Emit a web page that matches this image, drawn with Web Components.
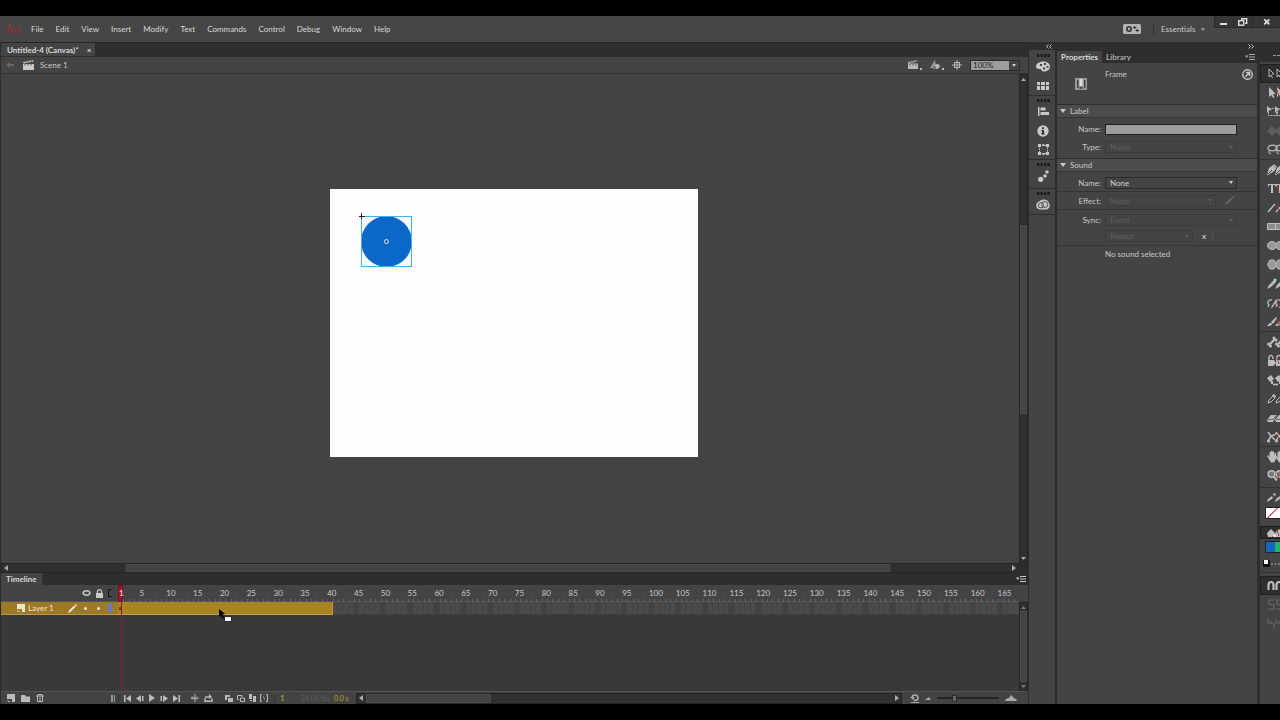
<!DOCTYPE html>
<html lang="en">
<head>
<meta charset="utf-8">
<title>Untitled-4 (Canvas)</title>
<style>
  html, body {
    height: 100%;
    margin: 0;
    background: #000;
  }
  body {
    font-family: Lato, "Open Sans", sans-serif;
    font-size: 8px;
    line-height: 10px;
    color: #c8c8c8;
  }
</style>
</head>
<body>
<an-app></an-app>

<script>
// name: [width, height, markup]
const icons = {
  back: [8, 8, '<path fill="#666" d="M0 4l4-3v2h4v2H4v2z"/>'],
  scene: [11, 10, '<path d="M0 4h11v6H0zM0 2l10-2 .4 1.6L.6 3.6z"/><path stroke="#444" stroke-width=".9" d="M2 1l1.6 2M4.6.6l1.6 2M7.3 0l1.6 2M2 4v1.4M5 4v1.4M8 4v1.4"/>'],
  sceneMenu: [14, 10, '<path d="M0 3.500h10V9H0zM0 2l9-2 .4 1.600L.6 3.600zM12 8h2v2h-2z"/><path stroke="#444" stroke-width=".9" d="M2 1l1.600 2M4.600.6l1.600 2M7.300 0l1.600 2M2 4v1.400M5 4v1.400M8 4v1.400"/>'],
  symbols: [14, 10, '<path d="M0 8l5-8 1 8z" opacity=".75"/><circle cx="7" cy="6.500" r="2.400"/><path d="M3 6h3v3H3z" fill="#777"/><path d="M8 3l3 4H9z" opacity=".5"/><path d="M12 8h2v2h-2z"/>'],
  center: [10, 10, '<g fill="none" stroke="currentColor"><rect x="2.5" y="2.5" width="5" height="5"/><path d="M5 0v10M0 5h10"/></g>'],
  sync: [18, 10, '<rect width="18" height="10" rx="1.5" fill="#b4b4b4"/><circle cx="6" cy="5" r="2.200" fill="none" stroke="#333" stroke-width="1.600"/><path stroke="#333" d="M10 3.500h3.400M11.700 2v3M12.500 6.500h3.400M14.200 5v3"/>'],
  minimize: [8, 8, '<path d="M0 5h7v2H0z" fill="#ddd"/>'],
  restore: [10, 8, '<g fill="none" stroke="#ddd" stroke-width="1.4"><path d="M3.700 2.500V.7h5v4.600H7"/><rect x=".7" y="2.700" width="5" height="4.500"/></g>'],
  close: [8, 8, '<path stroke="#ddd" stroke-width="1.8" d="M1.300 1.300l5 5M6.300 1.300l-5 5"/>'],
  caret: [6, 4, '<path d="M0 0h6L3 4z"/>'],
  smallCaret: [4, 3, '<path d="M0 0h4L2 3z"/>'],
  collapse: [6, 5, '<path fill="none" stroke="currentColor" d="M2.500.5l-2 2 2 2M5.500.5l-2 2 2 2"/>'],
  expand: [6, 5, '<path fill="none" stroke="currentColor" d="M.5.5l2 2-2 2M3.500.5l2 2-2 2"/>'],
  menu: [10, 6, '<path d="M0 1.500h3.500L1.700 4z"/><path stroke="currentColor" d="M4 .5h6M4 3h6M4 5.500h6"/>'],
  left: [4, 6, '<path d="M4 0v6L0 3z"/>'],
  right: [4, 6, '<path d="M0 0v6l4-3z"/>'],
  up: [5, 3, '<path d="M0 3h5L2.500 0z"/>'],
  down: [5, 3, '<path d="M0 0h5L2.500 3z"/>'],
  grip: [13, 3, '<path stroke="#1c1c1c" stroke-width="3" stroke-dasharray="2.300 1.200" d="M0 1.500h13"/>'],
  palette: [14, 11, '<path fill-rule="evenodd" d="M7 .5c4 0 7 2 7 5s-3 5-6.500 5C5 10.500 6 8 4 8S0 8 0 5.500s3-5 7-5zM4 3v2h2V3zm4-1v2h2V2zm2.500 3v1.800h2V5zM7 6.500v2h2v-2z"/>'],
  swatches: [12, 8, '<path d="M0 0h3v3H0zM4 0h4v3H4zM9 0h3v3H9zM0 4h3v4H0zM4 4h4v4H4zM9 4h3v4H9z"/>'],
  align: [11, 9, '<path d="M0 0h1.500v9H0zM2.500.5h5v3h-5zM2.500 5H11v3H2.500z"/>'],
  info: [12, 12, '<circle cx="6" cy="6" r="5.700"/><path fill="#333" d="M5 2.200h2v1.900H5zM4.300 5H7v3.500h.8v1H4.300v-1H5V6h-.7z"/>'],
  transform: [11, 11, '<rect x="1.500" y="1.500" width="8" height="8" fill="none" stroke="currentColor" stroke-dasharray="1.500 1"/><path d="M0 0h3v3H0zM4.500 0h2v2h-2zM8 0h3v3H8zM0 8h3v3H0zM4.500 9h2v2h-2zM8 8h3v3H8z"/>'],
  motion: [11, 12, '<circle cx="2.700" cy="9.300" r="2.600"/><circle cx="7" cy="6" r="1.800"/><circle cx="9" cy="2" r="1.700"/>'],
  cloud: [14, 11, '<path d="M4 2c2-2.500 8-2 9 2 2 3 0 6.500-3 6.500H4C-1 10-1 3 4 2z"/><g fill="none" stroke="#505050"><circle cx="5" cy="6.300" r="2.600"/><circle cx="8.800" cy="5.500" r="3"/></g>'],
  frame: [12, 12, '<rect width="12" height="12" fill="#999"/><path fill="#444" d="M2 2h1.500v8H2zM9 2h1.500v8H9z"/><path fill="#ddd" d="M4.500 1h3v7h-3z"/><path fill="#555" d="M4.500 8.500h3V11h-3z"/>'],
  help: [11, 11, '<g fill="none" stroke="currentColor" stroke-width="1.400"><circle cx="5.500" cy="5.500" r="4.700"/><path d="M3.300 7.700l4-4M4 3.400h3.500V7" stroke-width="1.500"/></g>'],
  pencil: [9, 9, '<path d="M0 9l1-2.500L6 1.500 7.500 3l-5 5zM6.500 1L8 0l1 1-1 1.500z"/>'],
  eye: [9, 6, '<path fill="none" stroke="currentColor" stroke-width="1.400" d="M1 3c1-3 6-3 7 0-1 3-6 3-7 0z"/>'],
  lock: [7, 9, '<rect y="4" width="7" height="5"/><path fill="none" stroke="currentColor" stroke-width="1.200" d="M1.500 4V2.500c0-2.500 4-2.500 4 0V4"/>'],
  outline: [4, 8, '<path fill="none" stroke="#111" d="M3.500.5h-3v7h3"/>'],
  layer: [8, 8, '<path d="M0 0h8v8H5V5H0z"/><path d="M0 6l3 2H1z"/>'],
  dot: [3, 3, '<circle cx="1.500" cy="1.500" r="1.500"/>'],
  newLayer: [8, 8, '<path d="M0 0h8v8H5V5H0z"/><path d="M0 6l4 2H1z"/>'],
  folder: [9, 7, '<path d="M0 0h4l1 1.500h4V7H0z"/>'],
  trash: [8, 8, '<path fill="none" stroke="currentColor" d="M0 2h8M2 2V.5h4V2M1.500 2v5.500h5V2M4 3v4"/>'],
  onionBar: [4, 7, '<path d="M0 0h2v7H0zM3 0h1v7H3z"/>'],
  first: [7, 7, '<path d="M0 0h1.500v7H0zM7 0v7L2 3.500z"/>'],
  prev: [8, 7, '<path d="M5 0v7L0 3.500zM6 1h1.500v5H6z"/>'],
  play: [6, 8, '<path d="M0 0v8l6-4z"/>'],
  next: [8, 7, '<path d="M3 0v7l5-3.500zM.5 1H2v5H.5z"/>'],
  last: [7, 7, '<path d="M5.500 0H7v7H5.500zM0 0v7l5-3.500z"/>'],
  centerFrame: [8, 8, '<path d="M3.500 0h1v8h-1zM0 3.500h8v1.200H0zM1.500 2v4L0 4zM6.500 2v4L8 4z"/>'],
  loop: [9, 8, '<path fill="none" stroke="currentColor" stroke-width="1.400" d="M1 4v3.300h7V4M1 3h5"/><path d="M5 0l3 2.700L5 5z"/>'],
  onion: [8, 7, '<path d="M0 0h5v2H2v3H0zM3 3h5v4H3z"/>'],
  onionOutline: [8, 7, '<path fill="none" stroke="currentColor" d="M5 2V.5H.5v4H2M3.500 3h4v3.500h-4z"/>'],
  editFrames: [7, 8, '<path d="M0 0h3v5H0zM4 2h3v6H4z"/><path d="M1 6h2v1H1z"/>'],
  markers: [8, 8, '<path fill="none" stroke="currentColor" d="M2 .5H.5v7H2M6 .5h1.500v7H6M3 3h1M4 5h1"/>'],
  undo: [9, 9, '<path fill="none" stroke="currentColor" stroke-width="1.600" d="M2 4c0-4 6-4 6 0 0 2-2 2.500-4 2.500"/><path d="M0 3h4v3.500zM1 8h8v1H1z"/>'],
  smallHill: [6, 3, '<path d="M0 3l2-1.500L4 0l2 3z"/>'],
  bigHill: [12, 6, '<path d="M0 6l1-2 3-1 2-3 3 3 2 1 1 2z"/>'],
  cursor: [15, 17, '<path fill="#000" d="M0 0l6 5-2.500.4L5 9 3.500 9.500 2 6 0 8z"/><path fill="#fff" d="M6 8h6v4H6z"/><path fill="none" stroke="#222" d="M5.500 7.500h7v5h-7z" opacity=".5"/>'],
  defaults: [18, 8, '<path fill="#111" d="M0 0h7v7H0z"/><path fill="#fff" d="M1 0h4v4H1z"/><path stroke="#777" stroke-width="2" stroke-dasharray="2 1.500" d="M8 4h10"/>']
};

// Tools drawn as a glyph in a 9px box, followed by its modifier copy
const tools = {
  selection: '<path fill="none" stroke="currentColor" d="M2 2v8l2-2 1.500 3M2 2l5 5H5"/>',
  subselection: '<path d="M2 1v10l2.500-2 1.500 3 1.500-.8L6 8h3z"/>',
  freeTransform: '<path d="M0 1l5 4-3 .5L0 8z"/><rect x="1.500" y="3.500" width="9" height="7" fill="none" stroke="currentColor" stroke-dasharray="2 1"/>',
  rotate3d: '<path fill="#5e5e5e" d="M0 7l5-5 5 5-5 5z"/>',
  lasso: '<ellipse cx="5.500" cy="5" rx="4.500" ry="2.800" fill="none" stroke="currentColor" stroke-width="1.300"/><path fill="none" stroke="currentColor" d="M2 7v3l2 1"/>',
  pen: '<path d="M0 12l2-7 4-3 3 4-3 3-5 3z"/><path stroke="#444" d="M1 11l4-4"/><path d="M7 1l3 3-1 1-3-3z"/>',
  text: '<path d="M1 2h8v2.500h-.8L7.800 3H6v7.500l1 .5H3l1-.5V3H2.200l-.4 1.500H1z"/>',
  line: '<path stroke="currentColor" stroke-width="1.500" d="M1 11L8 3"/>',
  rectangle: '<path fill="#8d8d8d" stroke="currentColor" d="M.5 3.500h9v6h-9z"/>',
  oval: '<ellipse cx="5" cy="6.500" rx="4.500" ry="4" fill="#999" stroke="currentColor"/>',
  polygon: '<path fill="#999" stroke="currentColor" d="M3 2h4l3 4.500L7 11H3L.5 6.500z"/>',
  pencilTool: '<path d="M0 12l2-4 5-5 2 2-5 5z"/><circle cx="8" cy="3" r="1.500" fill="#9edede"/>',
  brush: '<path d="M4 12c1-3 3-5 5-9l1 1c-1 3-3 5-5 8z"/><path fill="none" stroke="currentColor" stroke-width="1.300" d="M5 4C1 3 0 7 2 9l-1 2"/>',
  paint: '<path d="M0 11c2-1 2-4 4-3s1 3-4 3zM4 7l5-5 1 1-4 6z"/>',
  bone: '<path stroke="currentColor" stroke-width="2" d="M2 10l6-6"/><circle cx="1.500" cy="9" r="1.500"/><circle cx="3.500" cy="11" r="1.500"/><circle cx="7" cy="3" r="1.500"/><circle cx="9" cy="5" r="1.500"/>',
  bucket: '<path d="M1 6h6l2 3-3 3H1z"/><path fill="none" stroke="currentColor" stroke-width="1.400" d="M2 6c-1-6 4-6 4-1"/>',
  ink: '<path d="M0 5l4-3 3 4-4 3zM4 8h2v3H4z"/><path stroke="currentColor" stroke-width="1.600" d="M6 11.500h5"/>',
  dropper: '<path fill="none" stroke="currentColor" d="M1 11l1-3 4-4 2 2-4 4z"/><path d="M5 3l2-1 2 2-1 2z"/>',
  eraser: '<path d="M0 9l4-5h6L6 11H1z"/><path stroke="#666" d="M1 8.500h5l3-4"/>',
  width: '<path fill="none" stroke="currentColor" stroke-width="1.500" d="M1 2l3 4 3-1 3-2M1 11l3-5 4 4"/><circle cx="1.500" cy="11" r="1.500"/>',
  hand: '<path d="M0 6l1-1 1.500 2V2h1.500v4-5h1.500v5-4.500H7V6l.5-3H9v6l-2 3.500H4z"/>',
  zoom: '<circle cx="4.500" cy="5" r="3.300" fill="#777" stroke="currentColor" stroke-width="1.500"/><path stroke="currentColor" stroke-width="2" d="M7 8l3 3.500"/>',
  stroke: '<path d="M0 11l1-3 4-3 1 2-4 3zM6 3l2-1 1 2-2 1z"/>',
  fill: '<path d="M0 7l4-4 4 4-3 4H1z"/><path fill="#ddd" d="M6 8h3v3H6z"/>',
  snap: '<path fill="none" stroke="currentColor" stroke-width="2.200" d="M1.500 11V6c0-4 5-4 5 0v5"/>',
  smooth: '<path fill="none" stroke="#666" stroke-width="1.200" d="M7 2H2v4l5 1v4H1"/>',
  straighten: '<path fill="none" stroke="#666" stroke-width="1.200" d="M1 2v4h6v6M4 6V4"/>'
};

const base = `
  * { box-sizing: border-box; }
  button, select, input {
    font: inherit;
    color: inherit;
    margin: 0;
    padding: 0;
    border: 0;
    border-radius: 0;
    background: none;
    outline: 0;
  }
  button { display: flex; align-items: center; justify-content: center; }
  select { appearance: none; min-width: 0; width: 100%; }
  h2 { font-size: inherit; font-weight: 700; margin: 0; }
  .drop { display: grid; align-items: center; }
  .drop > * { grid-area: 1 / 1; }
  .drop x-icon { justify-self: end; pointer-events: none; }
`;

function define(name, css, html, setup) {
  const template = document.createElement("template");
  template.innerHTML = `<style>${base}${css}</style>${html}`;
  customElements.define(name, class extends HTMLElement {
    constructor() {
      super();
      this.attachShadow({ mode: "open" });
      this.shadowRoot.appendChild(template.content.cloneNode(true));
    }
    connectedCallback() {
      if (setup) setup(this.shadowRoot, this);
    }
  });
}

define("x-icon", `
  :host { display: block; flex: none; }
  svg { display: block; fill: currentColor; }
`, `<svg aria-hidden="true"></svg>`, (root, host) => {
  const [w, h, markup] = icons[host.getAttribute("name")];
  const svg = root.querySelector("svg");
  svg.setAttribute("width", w);
  svg.setAttribute("height", h);
  svg.setAttribute("viewBox", `0 0 ${w} ${h}`);
  svg.innerHTML = markup;
});

define("scroll-bar", `
  :host { display: flex; align-items: stretch; box-sizing: border-box; background: #303030; color: #aaa; border: 1px solid #252525; }
  :host([vertical]) { flex-direction: column; }
  button { flex: none; width: 8px; }
  :host([vertical]) button { width: auto; height: 8px; }
  .before { flex: var(--before, 0) 0 0; }
  .thumb { flex: var(--thumb, 1) 0 0; background: #434343; border: 1px solid #4c4c4c; }
  .after { flex: var(--after, 0) 0 0; }
`, `
  <button class="dec"></button>
  <div class="before"></div><div class="thumb"></div><div class="after"></div>
  <button class="inc"></button>
`, (root, host) => {
  const vertical = host.hasAttribute("vertical");
  const dec = root.querySelector(".dec");
  const inc = root.querySelector(".inc");
  dec.innerHTML = `<x-icon name="${vertical ? "up" : "left"}"></x-icon>`;
  inc.innerHTML = `<x-icon name="${vertical ? "down" : "right"}"></x-icon>`;
  dec.setAttribute("aria-label", "Scroll back");
  inc.setAttribute("aria-label", "Scroll forward");
});

define("menu-bar", `
  :host { display: flex; box-sizing: border-box; height: 26px; flex: none; align-items: center; background: #464646; padding-left: 5px; }
  .logo { width: 26px; font-size: 13px; line-height: 16px; color: #8f3238; }
  nav { display: flex; gap: 12px; flex: 1; color: #d8d8d8; }
  .sep { width: 1px; height: 14px; background: #353535; margin: 0 7px 0 12px; }
  .workspace { width: 44px; margin-right: 9px; }
  .workspace x-icon { color: #999; }
  .win { display: flex; align-self: flex-start; background: #363636; height: 12px; border: 1px solid #2a2a2a; border-top: 0; border-right: 0; }
  .win button { width: 19px; border-right: 1px solid #2a2a2a; }
  .win button:last-child { width: 27px; border: 0; }
`, `
  <span class="logo">An</span>
  <nav>
    <button>File</button><button>Edit</button><button>View</button><button>Insert</button>
    <button>Modify</button><button>Text</button><button>Commands</button><button>Control</button>
    <button>Debug</button><button>Window</button><button>Help</button>
  </nav>
  <button aria-label="Sync settings"><x-icon name="sync"></x-icon></button>
  <div class="sep"></div>
  <div class="drop workspace">
    <select aria-label="Workspace"><option>Essentials</option></select>
    <x-icon name="smallCaret"></x-icon>
  </div>
  <div class="win">
    <button aria-label="Minimize"><x-icon name="minimize"></x-icon></button>
    <button aria-label="Restore"><x-icon name="restore"></x-icon></button>
    <button aria-label="Close"><x-icon name="close"></x-icon></button>
  </div>
`);

define("document-view", `
  :host { display: flex; flex-direction: column; min-height: 0; flex: 1; }
  .tabs { display: flex; flex: none; height: 14px; background: #2e2e2e; border-top: 1px solid #262626; }
  .tab { display: flex; align-items: center; gap: 8px; padding: 0 4px 0 6px; background: #444; color: #d8d8d8; font-weight: 700; }
  .scene { display: flex; flex: none; align-items: center; height: 18px; padding: 0 8px 0 5px; background: #444; border-top: 1px solid #303030; border-bottom: 1px solid #303030; }
  .scene > span { flex: 1; margin-left: 6px; }
  .scene > button { margin-right: 8px; color: #b8b8b8; }
  .scene > .back { margin-right: 9px; }
  .zoom { width: 50px; border: 1px solid #2a2a2a; height: 11px; }
  .zoom select { background: linear-gradient(#9d9d9d, #9d9d9d) 0 0 / 38px 100% no-repeat; height: 9px; color: #222; padding-left: 2px; line-height: 8px; }
  .zoom x-icon { margin-right: 3px; }
  .work { flex: 1; min-height: 0; display: grid; grid-template: minmax(0, 1fr) 10px / minmax(0, 1fr) 9px; }
  .paste { display: grid; place-items: center; padding: 8px 0 0 8px; background: #434343; overflow: hidden; }
  .stage { position: relative; width: 368px; height: 268px; background: #fdfdfd; }
  .stage svg { position: absolute; left: 27px; top: 23px; }
`, `
  <div class="tabs">
    <div class="tab"><span>Untitled-4 (Canvas)*</span><button aria-label="Close document">×</button></div>
  </div>
  <div class="scene">
    <button class="back" aria-label="Back"><x-icon name="back"></x-icon></button>
    <x-icon name="scene"></x-icon>
    <span>Scene 1</span>
    <button aria-label="Edit scene"><x-icon name="sceneMenu"></x-icon></button>
    <button aria-label="Edit symbols"><x-icon name="symbols"></x-icon></button>
    <button aria-label="Center stage"><x-icon name="center"></x-icon></button>
    <div class="drop zoom">
      <select aria-label="Zoom"><option>100%</option></select>
      <x-icon name="smallCaret"></x-icon>
    </div>
  </div>
  <div class="work">
    <div class="paste">
      <div class="stage">
        <svg width="56" height="56" viewBox="0 0 56 56">
          <circle cx="29.500" cy="29.500" r="25.500" fill="#0b68c8"/>
          <path fill="#3fb0f0" fill-rule="evenodd" d="M4 4h51v51H4zM5 5v49h49V5z"/>
          <path stroke="#222" d="M4.500 1v6M2 4.500h6"/>
          <circle cx="29.500" cy="29.500" r="2" fill="#1c5ca8" stroke="#d5e4f4"/>
        </svg>
      </div>
    </div>
    <scroll-bar vertical style="--before:140;--thumb:184;--after:138"></scroll-bar>
    <scroll-bar style="--before:116;--thumb:764;--after:120"></scroll-bar>
  </div>
`);

define("time-line", `
  :host { display: flex; flex-direction: column; flex: none; }
  .tabs { display: flex; align-items: center; justify-content: space-between; height: 12px; background: #2e2e2e; padding-right: 2px; }
  .tabs h2 { background: #444; color: #d8d8d8; padding: 1px 5px; height: 12px; }
  .body { display: grid; grid-template-columns: 117px minmax(0, 1fr) 9px; height: 106px; background: #393939; }
  .layers { display: grid; grid-template-rows: 17px 13px 1fr; }
  .head, .row { display: flex; align-items: center; justify-content: flex-end; }
  .head { background: #444; gap: 5px; padding-right: 6px; border-bottom: 1px solid #555; }
  .row { background: #9c7926; color: #f0e6cc; padding-right: 6px; border-bottom: 1px solid #b99a50; }
  .row span { width: 40px; margin-left: 3px; }
  .row .dots { display: flex; gap: 10px; margin: 0 8px 0 7px; }
  .mark { width: 4px; height: 8px; background: #6878d0; }
  .frames { position: relative; display: grid; grid-template-columns: repeat(168, minmax(0, 1fr)); grid-template-rows: 17px 13px 1fr; }
  .ruler { grid-area: 1 / 1 / 2 / -1; background: #444; border-bottom: 1px solid #555; }
  .num { grid-row: 1; align-self: center; white-space: nowrap; padding-bottom: 1px; }
  .tick { grid-row: 1; align-self: end; height: 3px; border-left: 1px solid #666; }
  .cell { grid-row: 2; background: #4a4a4a; border-right: 1px solid #444; border-bottom: 1px solid #404040; }
  .cell.fifth { background: #424242; }
  .span { grid-area: 2 / 1 / 3 / 41; background: #a98422; border-bottom: 1px solid #c2a45c; border-right: 1px solid #d0893c; }
  .head-mark { grid-area: 1 / 1; background: #a3122c; z-index: 1; border: 1px solid #7e1024; }
  .head-line { grid-area: 2 / 1 / 4 / 2; justify-self: start; margin-left: 3px; width: 1px; background: #8a1a2f; z-index: 1; }
  .key { grid-area: 2 / 1; align-self: center; justify-self: center; width: 3px; height: 3px; background: #8e2a18; z-index: 1; }
  .num.first { z-index: 2; color: #eee; padding-left: 1px; }
  .pointer { position: absolute; left: 101px; top: 24px; z-index: 3; }
  .side { display: flex; flex-direction: column; background: #444; padding-top: 17px; }
  .side scroll-bar { flex: 1; color: #777; }
  footer { display: flex; align-items: center; height: 13px; background: #434343; border-top: 1px solid #555; color: #bbb; }
  .edit { display: flex; align-items: center; gap: 6px; width: 117px; padding: 0 3px 0 6px; }
  .edit x-icon[name=onionBar] { margin-left: auto; color: #999; }
  .play, .onion { display: flex; align-items: center; }
  .play { gap: 5px; padding: 0 12px 0 5px; border-left: 1px solid #333; }
  .play button:nth-child(6) { margin-left: 6px; }
  .onion { gap: 4px; padding: 0 6px 0 0; border-right: 1px solid #333; }
  .now, .time { color: #c8a22c; }
  .now { width: 21px; margin-left: 5px; }
  .fps, .time { font-size: 7px; white-space: nowrap; }
  .fps { color: #5e5e5e; width: 33px; }
  .time { width: 22px; }
  footer scroll-bar { flex: 1; height: 11px; }
  .tail { display: flex; align-items: center; gap: 6px; padding: 0 11px 0 8px; color: #aaa; }
  input { appearance: none; width: 62px; height: 8px; background: linear-gradient(#222, #222) center / 100% 2px no-repeat; }
  input::-webkit-slider-thumb { appearance: none; width: 5px; height: 7px; background: #666; border: 1px solid #2a2a2a; }
`, `
  <div class="tabs">
    <h2>Timeline</h2>
    <button aria-label="Timeline menu"><x-icon name="menu"></x-icon></button>
  </div>
  <div class="body">
    <div class="layers">
      <div class="head">
        <x-icon name="eye"></x-icon><x-icon name="lock"></x-icon><x-icon name="outline"></x-icon>
      </div>
      <div class="row">
        <x-icon name="layer"></x-icon><span>Layer 1</span>
        <x-icon name="pencil"></x-icon>
        <div class="dots"><x-icon name="dot"></x-icon><x-icon name="dot"></x-icon></div>
        <div class="mark"></div>
      </div>
    </div>
    <div class="frames">
      <div class="ruler"></div>
      <div class="head-mark"></div><div class="head-line"></div>
      <x-icon class="pointer" name="cursor"></x-icon>
    </div>
    <div class="side"><scroll-bar vertical></scroll-bar></div>
  </div>
  <footer>
    <div class="edit">
      <button aria-label="New layer"><x-icon name="newLayer"></x-icon></button>
      <button aria-label="New folder"><x-icon name="folder"></x-icon></button>
      <button aria-label="Delete"><x-icon name="trash"></x-icon></button>
      <x-icon name="onionBar"></x-icon>
    </div>
    <div class="play">
      <button aria-label="First frame"><x-icon name="first"></x-icon></button>
      <button aria-label="Step back"><x-icon name="prev"></x-icon></button>
      <button aria-label="Play"><x-icon name="play"></x-icon></button>
      <button aria-label="Step forward"><x-icon name="next"></x-icon></button>
      <button aria-label="Last frame"><x-icon name="last"></x-icon></button>
      <button aria-label="Center frame"><x-icon name="centerFrame"></x-icon></button>
      <button aria-label="Loop"><x-icon name="loop"></x-icon></button>
    </div>
    <div class="onion">
      <button aria-label="Onion skin"><x-icon name="onion"></x-icon></button>
      <button aria-label="Onion skin outlines"><x-icon name="onionOutline"></x-icon></button>
      <button aria-label="Edit multiple frames"><x-icon name="editFrames"></x-icon></button>
      <button aria-label="Modify markers"><x-icon name="markers"></x-icon></button>
    </div>
    <span class="now">1</span><span class="fps">24.00 fps</span><span class="time">0.0 s</span>
    <scroll-bar style="--before:1;--thumb:123;--after:400"></scroll-bar>
    <div class="tail">
      <button aria-label="Reset zoom"><x-icon name="undo"></x-icon></button>
      <x-icon name="smallHill"></x-icon>
      <input type="range" aria-label="Timeline zoom" min="0" max="100" value="27">
      <x-icon name="bigHill"></x-icon>
    </div>
  </footer>
`, (root) => {
  const frames = root.querySelector(".frames");
  const add = (cls, column, text = "") => {
    const el = document.createElement("div");
    el.className = cls;
    if (column) el.style.gridColumn = column;
    el.textContent = text;
    frames.appendChild(el);
  };
  for (let i = 1; i <= 168; i++) {
    add(i % 5 ? "cell" : "cell fifth", i);
    if (i > 1) add("tick", i);
  }
  add("span");
  add("key");
  add("num first", "1 / span 2", "1");
  for (let i = 5; i <= 165; i += 5) add("num", `${i} / span 4`, i);
});

define("panel-dock", `
  :host { display: flex; flex-direction: column; background: #444; border-right: 2px solid #2c2c2c; border-left: 1px solid #2c2c2c; }
  header { display: flex; justify-content: flex-end; align-items: center; height: 8px; padding-right: 3px; background: #2e2e2e; }
  .group { display: flex; flex-direction: column; align-items: center; padding: 3px 0 0 2px; border-bottom: 1px solid #2f2f2f; }
  .group.first { padding-top: 4px; }
  .group.motion { padding-bottom: 3px; }
  .group button { height: 19px; width: 100%; }
`, `
  <header><x-icon name="collapse"></x-icon></header>
  <div class="group first">
    <x-icon name="grip"></x-icon>
    <button aria-label="Color"><x-icon name="palette"></x-icon></button>
    <button aria-label="Swatches"><x-icon name="swatches"></x-icon></button>
  </div>
  <div class="group">
    <x-icon name="grip"></x-icon>
    <button aria-label="Align"><x-icon name="align"></x-icon></button>
    <button aria-label="Info"><x-icon name="info"></x-icon></button>
    <button aria-label="Transform"><x-icon name="transform"></x-icon></button>
  </div>
  <div class="group motion">
    <x-icon name="grip"></x-icon>
    <button aria-label="Motion presets"><x-icon name="motion"></x-icon></button>
  </div>
  <div class="group">
    <x-icon name="grip"></x-icon>
    <button aria-label="Libraries"><x-icon name="cloud"></x-icon></button>
  </div>
`);

define("properties-panel", `
  :host { display: flex; flex-direction: column; background: #444; border-right: 3px solid #2e2e2e; }
  header { display: flex; justify-content: flex-end; align-items: center; height: 9px; padding-right: 3px; background: #2e2e2e; }
  .tabs { display: flex; align-items: center; height: 12px; background: #2e2e2e; padding-right: 2px; color: #a8a8a8; }
  .tabs button { height: 12px; padding: 0 4px; font-weight: 700; }
  .tabs .on { background: #444; color: #dcdcdc; }
  .tabs .more { margin-left: auto; padding: 0; }
  .kind { display: flex; gap: 18px; height: 41px; padding: 6px 4px 0 18px; }
  .kind x-icon[name=frame] { margin-top: 9px; }
  .kind span { flex: 1; }
  h2 { display: flex; align-items: center; gap: 4px; height: 14px; padding-left: 3px; background: #4c4c4c; border-top: 1px solid #2f2f2f; border-bottom: 1px solid #363636; font-weight: 400; }
  .rows { padding: 2px 0; }
  .row { display: grid; grid-template-columns: 44px minmax(0, 1fr); column-gap: 4px; align-items: center; height: 18px; padding-right: 20px; }
  .row label { text-align: right; }
  .row.line { border-bottom: 1px solid #343434; }
  .row.sync { height: 20px; }
  .row.tight { height: 16px; align-items: start; }
  .row input { height: 11px; background: #9d9d9d; border: 1px solid #222; }
  .row .drop { border: 1px solid #3c3c3c; height: 12px; }
  .row .drop select { padding-left: 4px; height: 10px; opacity: 1; }
  .row .drop x-icon { margin-right: 3px; }
  .row .drop.off { color: #5e5e5e; }
  .row .drop.live { border-color: #2a2a2a; color: #d0d0d0; }
  .pair { display: flex; align-items: center; gap: 9px; }
  .pair .drop { width: 111px; }
  .pair x-icon[name=pencil] { color: #666; }
  .pair .short { width: 88px; }
  .pair i { font-style: normal; color: #606060; margin-left: -4px; }
  p { margin: 3px 0 0 48px; }
`, `
  <header><x-icon name="expand"></x-icon></header>
  <div class="tabs">
    <button class="on">Properties</button><button>Library</button>
    <button class="more" aria-label="Panel menu"><x-icon name="menu"></x-icon></button>
  </div>
  <div class="kind">
    <x-icon name="frame"></x-icon><span>Frame</span>
    <x-icon name="help"></x-icon>
  </div>
  <h2><x-icon name="caret"></x-icon>Label</h2>
  <div class="rows">
    <div class="row"><label for="label-name">Name:</label><input id="label-name" type="text"></div>
    <div class="row"><label for="label-type">Type:</label>
      <div class="drop off"><select id="label-type" disabled><option>Name</option></select><x-icon name="smallCaret"></x-icon></div></div>
  </div>
  <h2><x-icon name="caret"></x-icon>Sound</h2>
  <div class="rows">
    <div class="row line"><label for="sound-name">Name:</label>
      <div class="drop live"><select id="sound-name"><option>None</option></select><x-icon name="smallCaret"></x-icon></div></div>
    <div class="row line"><label for="effect">Effect:</label>
      <div class="pair"><div class="drop off"><select id="effect" disabled><option>None</option></select><x-icon name="smallCaret"></x-icon></div>
        <x-icon name="pencil"></x-icon></div></div>
    <div class="row sync"><label for="sync">Sync:</label>
      <div class="drop off"><select id="sync" disabled><option>Event</option></select><x-icon name="smallCaret"></x-icon></div></div>
    <div class="row line tight"><span></span>
      <div class="pair"><div class="drop off short"><select aria-label="Repeat" disabled><option>Repeat</option></select><x-icon name="smallCaret"></x-icon></div>
        <b>x</b><i>)</i></div></div>
    <p>No sound selected</p>
  </div>
`);

define("tool-button", `
  :host { display: block; }
  button { width: 100%; height: var(--tool-height, 19px); justify-content: flex-start; padding-left: 7px; overflow: hidden; color: #bdbdbd; }
  :host([on]) button { background: #2f2f2f; border: 1px solid #1f1f1f; border-right: 0; padding-left: 6px; }
  svg { flex: none; fill: currentColor; }
`, `<button><svg width="14" height="13" viewBox="0 0 14 13"></svg></button>`, (root, host) => {
  const name = host.getAttribute("name");
  const tint = host.hasAttribute("tint") ? '<path stroke="#a33b3b" d="M10 4l2 6"/>' : "";
  root.querySelector("button").setAttribute("aria-label", name);
  root.querySelector("svg").innerHTML = `${tools[name]}<g transform="translate(8)">${tools[name]}</g>${tint}`;
});

define("tool-bar", `
  :host { display: flex; flex-direction: column; background: #444; overflow: hidden; }
  header { height: 22px; flex: none; background: #2e2e2e; display: flex; align-items: center; padding: 6px 0 0 13px; border-bottom: 2px solid #444; }
  .dots { width: 7px; height: 1px; background: repeating-linear-gradient(90deg, #999 0 3px, transparent 3px 4px); }
  .group { border-bottom: 1px solid #323232; }
  .group.view { padding-bottom: 2px; }
  .group.colors { display: flex; flex-direction: column; gap: 1px; padding-bottom: 4px; }
  .group.colors tool-button { --tool-height: 18px; }
  .group.colors tool-button[on] { --tool-height: 13px; margin-top: 6px; }
  .swatch { height: 12px; margin-left: 5px; border: 1px solid #222; border-right: 0; }
  .none { background: #fff linear-gradient(135deg, transparent 44%, #d66 45% 50%, transparent 51%); }
  .blue { background: linear-gradient(90deg, #1464c4 0 9px, #1fb36a 9px); margin-top: 1px; }
  .defaults { margin: 6px 0 0 3px; }
  .options { padding-top: 3px; border-color: transparent; }
`, `
  <header><div class="dots"></div></header>
  <div class="group">
    <tool-button name="selection" on></tool-button><tool-button name="subselection" tint></tool-button>
    <tool-button name="freeTransform"></tool-button><tool-button name="rotate3d"></tool-button>
    <tool-button name="lasso"></tool-button>
  </div>
  <div class="group">
    <tool-button name="pen"></tool-button><tool-button name="text" tint></tool-button>
    <tool-button name="line" tint></tool-button><tool-button name="rectangle"></tool-button>
    <tool-button name="oval"></tool-button><tool-button name="polygon"></tool-button>
    <tool-button name="pencilTool"></tool-button><tool-button name="brush" tint></tool-button>
    <tool-button name="paint" tint></tool-button>
  </div>
  <div class="group">
    <tool-button name="bone"></tool-button><tool-button name="bucket" tint></tool-button>
    <tool-button name="ink"></tool-button><tool-button name="dropper"></tool-button>
    <tool-button name="eraser"></tool-button><tool-button name="width" tint></tool-button>
  </div>
  <div class="group view">
    <tool-button name="hand"></tool-button><tool-button name="zoom" tint></tool-button>
  </div>
  <div class="group colors">
    <tool-button name="stroke"></tool-button>
    <button class="swatch none" aria-label="Stroke color"></button>
    <tool-button name="fill" on tint></tool-button>
    <button class="swatch blue" aria-label="Fill color"></button>
    <x-icon class="defaults" name="defaults"></x-icon>
  </div>
  <div class="group options">
    <tool-button name="snap" on></tool-button><tool-button name="smooth"></tool-button>
    <tool-button name="straighten"></tool-button>
  </div>
`);

define("an-app", `
  :host { display: flex; flex-direction: column; box-sizing: border-box; height: 100vh; padding: 16px 0; }
  main { flex: 1; min-height: 0; display: grid; grid-template: minmax(0, 1fr) / minmax(0, 1fr) 29px 203px 20px; background: #2c2c2c; }
  .left { display: flex; flex-direction: column; min-width: 0; min-height: 0; border-left: 1px solid #2c2c2c; }
`, `
  <menu-bar></menu-bar>
  <main>
    <div class="left">
      <document-view></document-view>
      <time-line></time-line>
    </div>
    <panel-dock></panel-dock>
    <properties-panel></properties-panel>
    <tool-bar></tool-bar>
  </main>
`);
</script>
</body>
</html>
